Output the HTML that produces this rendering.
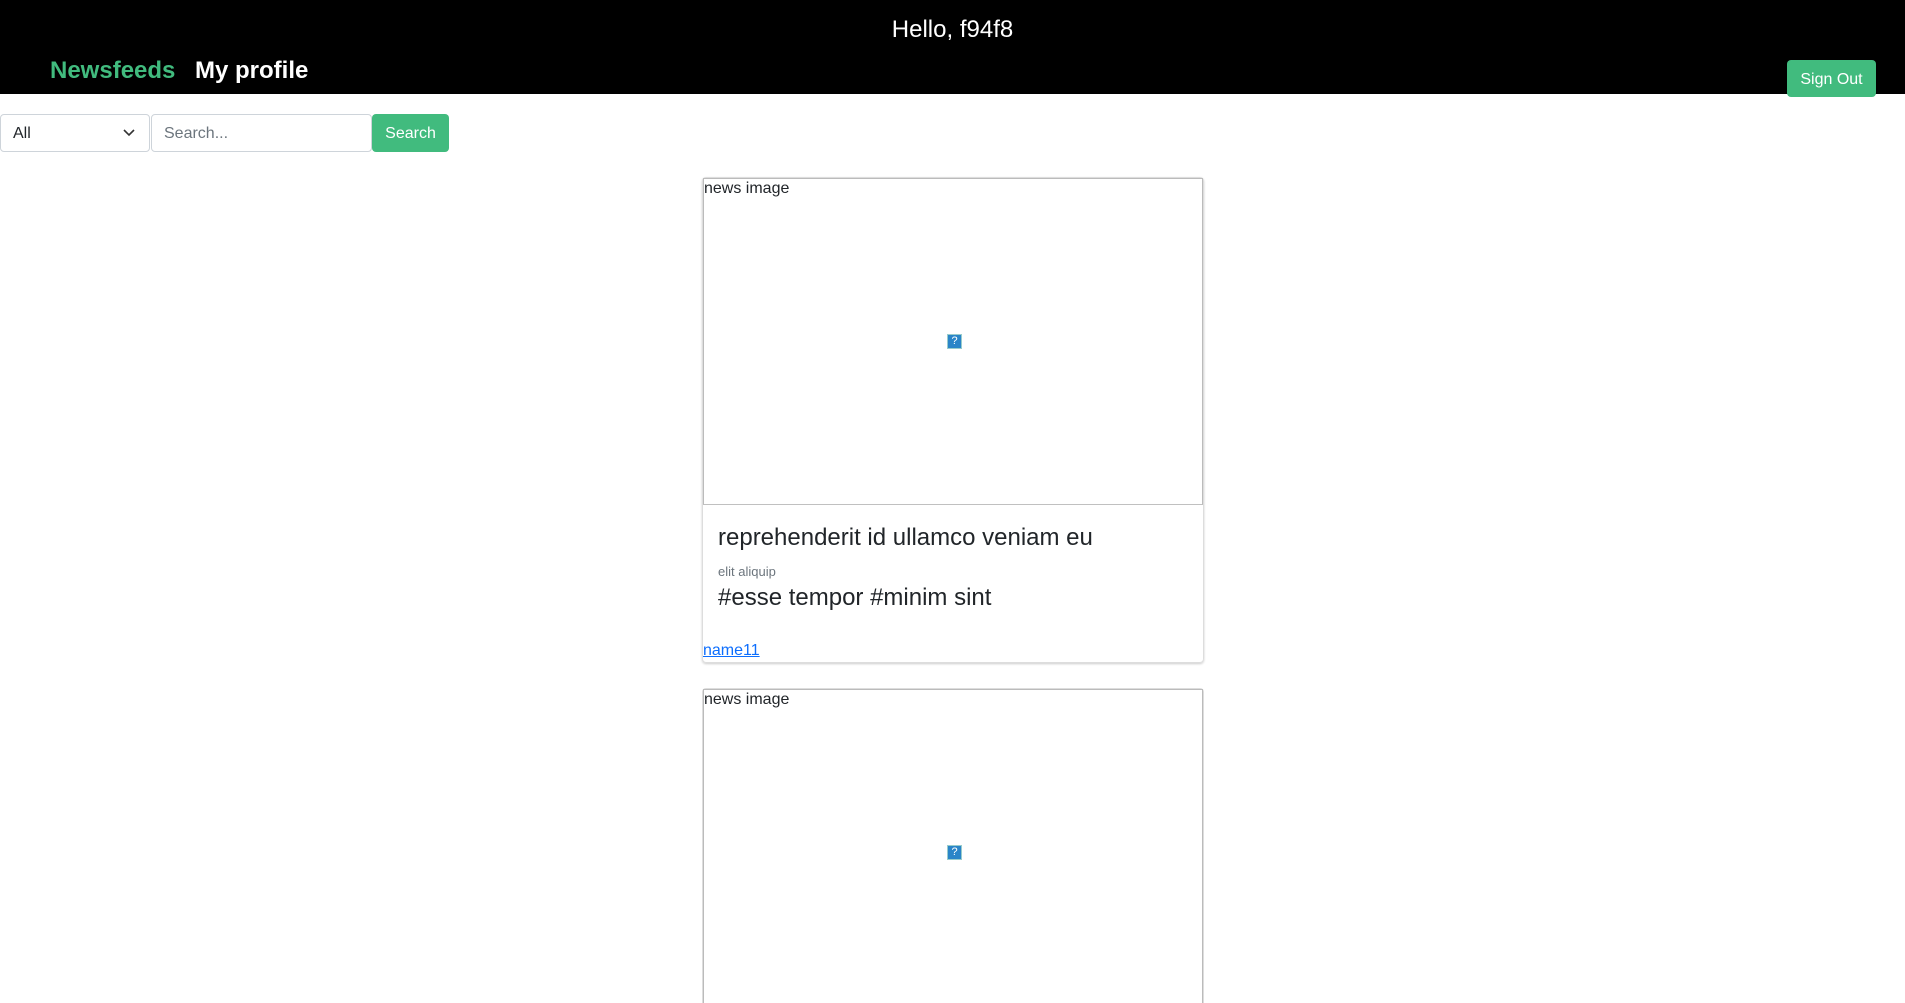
<!DOCTYPE html>
<html style="height:1003px;overflow:hidden"><head><meta charset="utf-8"><style>
*{box-sizing:border-box;margin:0;padding:0}
body{width:1905px;height:1003px;overflow:hidden;background:#fff;font-family:"Liberation Sans",sans-serif;color:#212529;position:relative}
.hdr{position:absolute;left:0;top:0;width:1905px;height:94px;background:#000}
.hello{position:absolute;top:16px;width:100%;text-align:center;color:#fff;font-size:24px}
.nav{position:absolute;top:57px;font-size:24px;font-weight:bold}
.btn{position:absolute;background:#41bb7e;color:#fff;border-radius:4px;font-size:16px;text-align:center}
.sel,.inp{position:absolute;top:114px;height:38px;border:1px solid #ced4da;border-radius:4px;font-size:16px}
.card{position:absolute;left:702px;width:502px;border:1px solid #ddd;border-radius:4px;box-shadow:0 1px 2px rgba(0,0,0,.2)}
.img{position:absolute;left:0;top:0;width:500px;height:327px;border:1px solid #bbb;border-bottom:1px solid #c0c0c0}
.img span{position:absolute;left:0;top:1px;font-size:16px}
.q{position:absolute;left:243px;top:155px;width:15px;height:15px;background:#2a85c8;border:1px solid #9cc;color:#fff;font-size:11px;text-align:center;line-height:13px}
</style></head><body>
<div class="hdr">
<div class="hello">Hello, f94f8</div>
<div class="nav" style="left:50px;color:#41bb7e">Newsfeeds</div>
<div class="nav" style="left:195px;color:#fff">My profile</div>
</div>
<div class="btn" style="left:1787px;top:60px;width:89px;height:37px;line-height:39px">Sign Out</div>
<div class="sel" style="left:0;width:150px;padding:0 12px;line-height:38px">All
<svg style="position:absolute;right:14px;top:14px" width="12" height="8" viewBox="0 0 12 8"><path d="M1 1l5 5 5-5" fill="none" stroke="#333" stroke-width="1.6"/></svg></div>
<div class="inp" style="left:151px;width:221px;padding:0 12px;line-height:38px;color:#6c757d">Search...</div>
<div class="btn" style="left:372px;top:114px;width:77px;height:38px;line-height:40px">Search</div>

<div class="card" style="top:177px;height:486px">
<div class="img"><span>news image</span><div class="q">?</div></div>
<div style="position:absolute;left:15px;top:346px;font-size:24px">reprehenderit id ullamco veniam eu</div>
<div style="position:absolute;left:15px;top:386px;font-size:13px;color:#6c757d">elit aliquip</div>
<div style="position:absolute;left:15px;top:406px;font-size:24px">#esse tempor #minim sint</div>
<div style="position:absolute;left:0;top:464px;font-size:16px;color:#0d6efd;text-decoration:underline">name11</div>
</div>
<div class="card" style="top:688px;height:315px;border-bottom:none;box-shadow:none;border-radius:4px 4px 0 0">
<div class="img" style="height:315px;border-bottom:none"><span>news image</span><div class="q">?</div></div>
</div>
</body></html>
